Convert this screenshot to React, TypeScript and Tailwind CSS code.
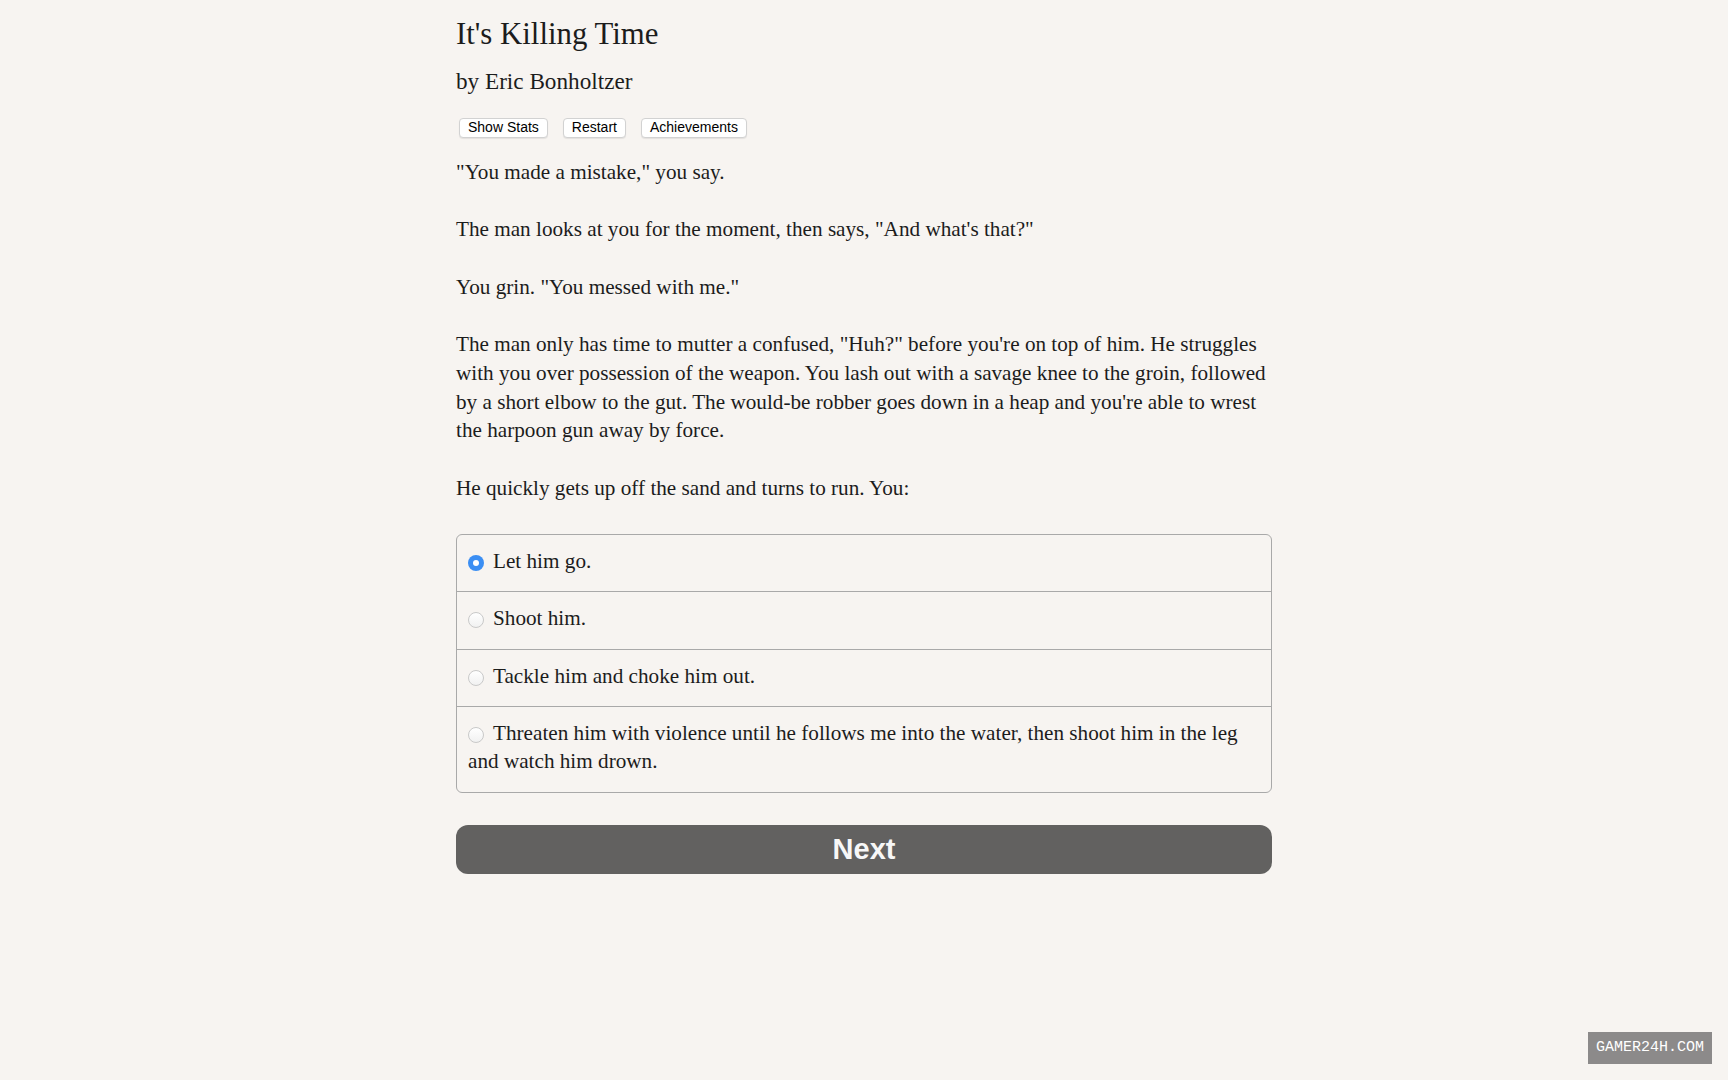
import { useState } from 'react';

const STORY = [
  '"You made a mistake," you say.',
  'The man looks at you for the moment, then says, "And what\'s that?"',
  'You grin. "You messed with me."',
  'The man only has time to mutter a confused, "Huh?" before you\'re on top of him. He struggles with you over possession of the weapon. You lash out with a savage knee to the groin, followed by a short elbow to the gut. The would-be robber goes down in a heap and you\'re able to wrest the harpoon gun away by force.',
  'He quickly gets up off the sand and turns to run. You:',
];

const CHOICES = [
  'Let him go.',
  'Shoot him.',
  'Tackle him and choke him out.',
  'Threaten him with violence until he follows me into the water, then shoot him in the leg and watch him drown.',
];

function Radio({ checked }: { checked: boolean }) {
  if (checked) {
    return (
      <span className="relative mr-[9px] inline-block h-[16px] w-[16px] rounded-full bg-[#3b8ef3] align-[-3px]">
        <span className="absolute top-[5px] left-[5px] h-[6px] w-[6px] rounded-full bg-white" />
      </span>
    );
  }
  return (
    <span className="mr-[9px] inline-block h-[16px] w-[16px] rounded-full border border-[#c9c9c9] bg-gradient-to-b from-white to-[#f1f1f1] align-[-3px]" />
  );
}

export default function App() {
  const [selected, setSelected] = useState(0);

  return (
    <div className="relative min-h-screen bg-[#f7f4f1] text-[#1c1c1c]">
      <div className="mx-auto w-[816px] pt-[16px] font-['Liberation_Serif',serif]">
        <h1 className="text-[30.8px] leading-[36px]">It's Killing Time</h1>
        <h2 className="mt-[15px] text-[23.2px] leading-[28px]">by Eric Bonholtzer</h2>

        <div className="mt-[23px] flex gap-[15px] pl-[3px] font-['Liberation_Sans',sans-serif]">
          {['Show Stats', 'Restart', 'Achievements'].map((label) => (
            <button
              key={label}
              className="rounded-[4px] border border-[#d2d2d2] bg-white px-[8px] text-[14px] leading-[17.5px] text-black shadow-[0_1px_1px_rgba(0,0,0,0.08)]"
            >
              {label}
            </button>
          ))}
        </div>

        <div className="mt-[20px] text-[21.2px] leading-[28.75px]">
          {STORY.map((p, i) => (
            <p key={i} className="mb-[28.75px] last:mb-0">
              {p}
            </p>
          ))}
        </div>

        <div className="mt-[31px] overflow-hidden rounded-[6px] border border-[#a9a9a9] text-[21.2px] leading-[28px]">
          {CHOICES.map((choice, i) => (
            <label
              key={i}
              onClick={() => setSelected(i)}
              className="block cursor-pointer border-t border-[#a9a9a9] px-[11px] pt-[12px] pb-[16.6px] first:border-t-0"
            >
              <Radio checked={selected === i} />
              {choice}
            </label>
          ))}
        </div>

        <button className="mt-[32px] h-[49px] w-full rounded-[12px] bg-[#626160] font-['Liberation_Sans',sans-serif] text-[29px] font-bold text-[#f7f7f7]">
          Next
        </button>
      </div>

      <div className="absolute right-[16px] bottom-[16px] bg-[#8c8a8a] px-[8px] py-[5px] font-['Liberation_Mono',monospace] text-[15px] leading-[22px] text-white">
        GAMER24H.COM
      </div>
    </div>
  );
}
